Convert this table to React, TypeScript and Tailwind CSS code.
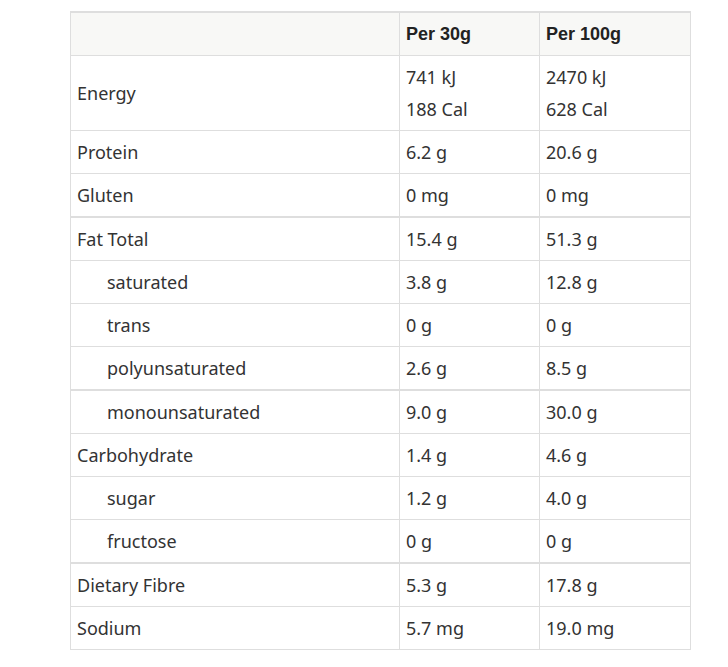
import React from 'react';

type Row = {
  label: string;
  a: string[];
  b: string[];
  indent?: boolean;
  groupStart?: boolean;
};

const ROWS: Row[] = [
  { label: 'Energy', a: ['741 kJ', '188 Cal'], b: ['2470 kJ', '628 Cal'] },
  { label: 'Protein', a: ['6.2 g'], b: ['20.6 g'] },
  { label: 'Gluten', a: ['0 mg'], b: ['0 mg'] },
  { label: 'Fat Total', a: ['15.4 g'], b: ['51.3 g'], groupStart: true },
  { label: 'saturated', a: ['3.8 g'], b: ['12.8 g'], indent: true },
  { label: 'trans', a: ['0 g'], b: ['0 g'], indent: true },
  { label: 'polyunsaturated', a: ['2.6 g'], b: ['8.5 g'], indent: true },
  { label: 'monounsaturated', a: ['9.0 g'], b: ['30.0 g'], indent: true, groupStart: true },
  { label: 'Carbohydrate', a: ['1.4 g'], b: ['4.6 g'] },
  { label: 'sugar', a: ['1.2 g'], b: ['4.0 g'], indent: true },
  { label: 'fructose', a: ['0 g'], b: ['0 g'], indent: true },
  { label: 'Dietary Fibre', a: ['5.3 g'], b: ['17.8 g'], groupStart: true },
  { label: 'Sodium', a: ['5.7 mg'], b: ['19.0 mg'] },
];

// Value cell: multi-line values (energy) get tighter padding, 32px per line.
function Values({ lines }: { lines: string[] }) {
  if (lines.length > 1) {
    return (
      <div className="py-[5px] leading-[32px]">
        {lines.map((l) => (
          <div key={l}>{l}</div>
        ))}
      </div>
    );
  }
  return <div className="py-[8px] leading-[26px]">{lines[0]}</div>;
}

export default function App() {
  return (
    <div className="min-h-[667px] bg-white pt-[11px] pl-[70px] font-['Noto_Sans',sans-serif] text-[18px] text-[#333]">
      <table className="w-[620px] table-fixed border-collapse border-t-2 border-[#dedede]">
        <colgroup>
          <col className="w-[329px]" />
          <col className="w-[140px]" />
          <col className="w-[151px]" />
        </colgroup>
        <thead>
          <tr className="bg-[#f8f8f6]">
            <th className="border border-[#dedede]" />
            <th className="border border-[#dedede] px-[6px] py-[8px] text-left font-['Liberation_Sans',sans-serif] text-[18px] font-bold leading-[26px] text-[#222]">
              Per 30g
            </th>
            <th className="border border-[#dedede] px-[6px] py-[8px] text-left font-['Liberation_Sans',sans-serif] text-[18px] font-bold leading-[26px] text-[#222]">
              Per 100g
            </th>
          </tr>
        </thead>
        <tbody>
          {ROWS.map((r) => (
            <tr key={r.label} className={r.groupStart ? 'border-t-2 border-[#dedede]' : ''}>
              <td className={`border border-[#dedede] align-middle leading-[26px] ${r.indent ? 'pl-[36px]' : 'pl-[6px]'}`}>
                {r.label}
              </td>
              <td className="border border-[#dedede] px-[6px] align-middle">
                <Values lines={r.a} />
              </td>
              <td className="border border-[#dedede] px-[6px] align-middle">
                <Values lines={r.b} />
              </td>
            </tr>
          ))}
        </tbody>
      </table>
    </div>
  );
}
